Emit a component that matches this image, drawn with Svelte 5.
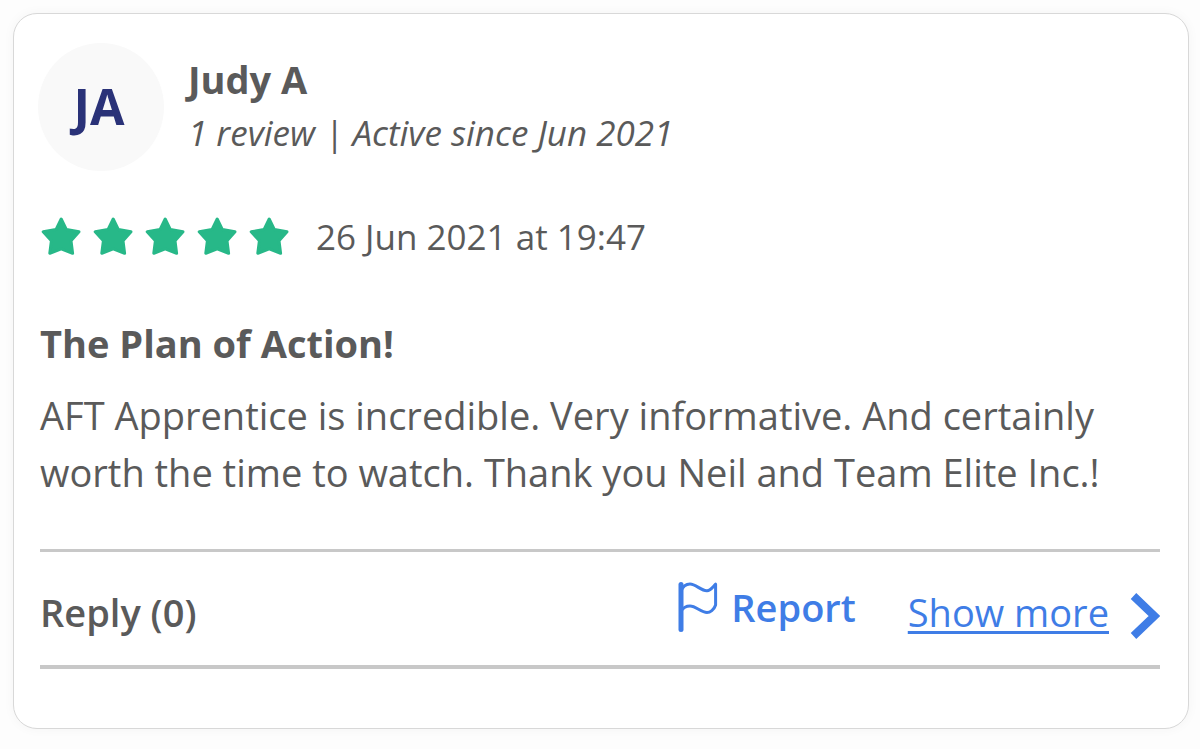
<script lang="ts">
  const review = {
    initials: "JA",
    name: "Judy A",
    meta: "1 review | Active since Jun 2021",
    rating: 5,
    date: "26 Jun 2021 at 19:47",
    title: "The Plan of Action!",
    body: "AFT Apprentice is incredible. Very informative. And certainly worth the time to watch. Thank you Neil and Team Elite Inc.!",
    replies: 0,
  };
</script>

<article class="card">
  <header class="author">
    <div class="avatar" aria-hidden="true">{review.initials}</div>
    <div class="who">
      <h2 class="name">{review.name}</h2>
      <p class="meta">{review.meta}</p>
    </div>
  </header>

  <div class="rating">
    <div class="stars" role="img" aria-label="{review.rating} out of 5 stars">
      {#each Array(review.rating) as _}
        <svg viewBox="0 0 42 40" class="star">
          <path
            d="M21.2 2 L26.4 12.6 L39 14.8 L31 23.8 L32.6 36.3 L21.2 31.8 L9.8 36.3 L11.4 23.8 L3.2 14.8 L16 12.6 Z"
          />
        </svg>
      {/each}
    </div>
    <time class="date" datetime="2021-06-26T19:47">{review.date}</time>
  </div>

  <h3 class="title">{review.title}</h3>
  <p class="body">{review.body}</p>

  <footer class="actions">
    <button class="reply">Reply ({review.replies})</button>
    <button class="report">
      <svg viewBox="0 0 42 52" class="flag" aria-hidden="true">
        <path class="pole" d="M4 3.5 V48.5" />
        <path
          d="M4 10 C6 5 9 3 13 3 C19 3 24 10 30 9.7 C34 9.5 36 5.5 38.6 3.2 V24 C37 29 33 31.5 30 31.5 C24 31.5 19 25 13 25 C9 25 6 27 4 30"
        />
      </svg>
      Report
    </button>
    <a href="#more" class="more">
      <span>Show more</span>
      <svg viewBox="0 0 30 46" class="chevron" aria-hidden="true">
        <path d="M3.5 3 L24.5 23 L3.5 43" />
      </svg>
    </a>
  </footer>
</article>

<style>
  :global(body) {
    margin: 0;
    background: #fdfdfd;
  }
  .card {
    box-sizing: border-box;
    margin: 13px 11px 20px 13px;
    padding: 29px 28px 59px 26px;
    border: 1px solid #d8d8d8;
    border-radius: 24px;
    background: #fff;
    box-shadow: 0 0 12px rgba(0, 0, 0, 0.04);
    color: #5a5a5a;
    font-family: "Open Sans", sans-serif;
  }
  h2,
  h3,
  p {
    margin: 0;
  }
  .author {
    display: flex;
    align-items: center;
    gap: 24px;
    margin-left: -2px;
  }
  .avatar {
    display: flex;
    align-items: center;
    justify-content: center;
    box-sizing: border-box;
    width: 126px;
    height: 128px;
    padding: 0 4px 2px 0;
    border-radius: 50%;
    background: #f9f9f9;
    color: #2a3278;
    font-size: 50px;
    font-weight: 700;
  }
  .who {
    padding-bottom: 2px;
  }
  .name {
    font-size: 38px;
    font-weight: 700;
    line-height: 54px;
  }
  .meta {
    font-size: 35px;
    font-style: italic;
    line-height: 54px;
  }
  .rating {
    display: flex;
    align-items: center;
    gap: 26px;
    margin-top: 40px;
  }
  .stars {
    display: flex;
    gap: 10px;
  }
  .star {
    width: 42px;
    height: 40px;
    fill: #27b888;
    stroke: #27b888;
    stroke-width: 3;
    stroke-linejoin: round;
  }
  .date {
    font-size: 35px;
    line-height: 52px;
  }
  .title {
    margin-top: 54px;
    font-size: 38px;
    font-weight: 700;
    line-height: 52px;
  }
  .body {
    margin-top: 18px;
    font-size: 38px;
    line-height: 57px;
  }
  .actions {
    display: flex;
    align-items: center;
    margin-top: 48px;
    padding: 31px 0 24px;
    border-top: 3px solid #c8c8c8;
    border-bottom: 4px solid #c8c8c8;
    line-height: 58px;
  }
  button {
    padding: 0;
    border: 0;
    background: none;
    font: inherit;
    cursor: pointer;
  }
  .reply {
    margin-right: auto;
    color: #5a5a5a;
    font-size: 38px;
    font-weight: 600;
  }
  .report {
    display: flex;
    align-items: center;
    gap: 12px;
    margin: -10px 0 0;
    color: #3f7de6;
    font-size: 38px;
    font-weight: 600;
  }
  .flag {
    width: 42px;
    height: 52px;
    fill: none;
    stroke: #3f7de6;
    stroke-width: 3;
    stroke-linejoin: round;
  }
  .pole {
    stroke-width: 5;
    stroke-linecap: round;
  }
  .more {
    display: flex;
    align-items: center;
    gap: 21px;
    margin-left: 52px;
    color: #3f7de6;
    font-size: 38px;
    text-decoration: none;
  }
  .more span {
    text-decoration: underline;
    text-decoration-thickness: 3px;
    text-underline-offset: 4px;
    text-decoration-skip-ink: none;
  }
  .chevron {
    width: 30px;
    height: 46px;
    margin-top: 8px;
    fill: none;
    stroke: #3f7de6;
    stroke-width: 8;
  }
</style>
